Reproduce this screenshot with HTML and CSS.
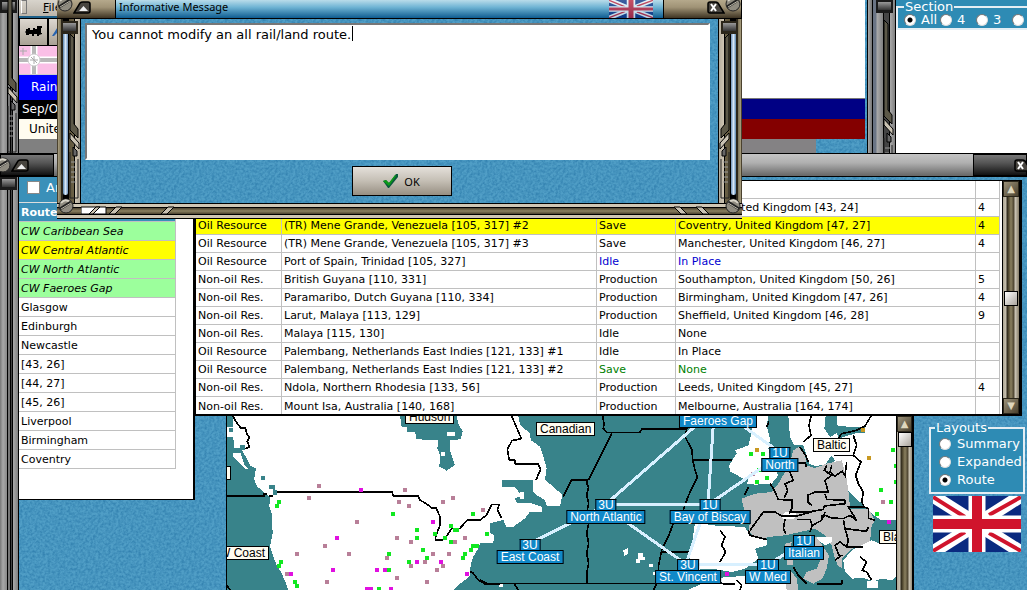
FILE: index.html
```html
<!DOCTYPE html>
<html lang="en">
<head>
    <meta charset="UTF-8">
    <meta name="viewport" content="width=device-width, initial-scale=1.0">
    <title>Informative Message</title>
    <link rel="stylesheet" href="styles.css">
</head>
<body>
    <!-- shared shapes -->
    <svg class="defs" aria-hidden="true">
        <symbol id="screw" viewBox="0 0 16 16">
            <circle cx="8" cy="8" r="7" fill="#8f8b80" stroke="#222"/>
            <path d="M3 5Q7 0 12 4" fill="none" stroke="#d8d4c8" stroke-width="2"/>
            <path d="M2 11L13 4" stroke="#222" stroke-width="3"/>
            <path d="M3 11L13 5" stroke="#bbb6a8"/>
        </symbol>
        <symbol id="roll-up" viewBox="0 0 18 13">
            <path d="M1 12L7 2Q8 1 10 1H15Q17 1 17 3V10Q17 12 15 12Z" fill="#48453f" stroke="#000" stroke-width="1.5"/>
            <path d="M6 10L10.500 5L15 10Z" fill="#eee"/>
        </symbol>
        <symbol id="cross" viewBox="0 0 18 13">
            <path d="M17 12L11 2Q10 1 8 1H3Q1 1 1 3V10Q1 12 3 12Z" fill="#48453f" stroke="#000" stroke-width="1.5"/>
            <path d="M4 3L9 10M9 3L4 10" stroke="#fff" stroke-width="2"/>
        </symbol>
        <symbol id="flag" viewBox="0 0 88 56" preserveAspectRatio="none">
            <path d="M0 0H88V56H0Z" fill="#0a2a80"/>
            <path d="M0 0L88 56M88 0L0 56" stroke="#fff" stroke-width="13"/>
            <path d="M0 1L32 21M88 1L56 19M0 55L32 36M88 55L56 37" stroke="#d0142c" stroke-width="4"/>
            <path d="M44 0V56M0 28H88" stroke="#fff" stroke-width="17"/>
            <path d="M44 0V56M0 28H88" stroke="#d0142c" stroke-width="10"/>
        </symbol>
        <symbol id="rail" viewBox="0 0 11 168">
            <path d="M1 2L5 6V92L9 97V106L1 98Z" fill="#5c5848" stroke="#000"/>
            <path d="M1 101L10 111V117L1 107Z" fill="#c9c2b2" stroke="#000"/>
            <path d="M4 115L8 119V124H4Z" fill="#666" stroke="#000"/>
            <path d="M1 120V166H9V127" fill="none" stroke="#222"/>
            <path d="M2 130H7M2 135H6M2 140H7M2 145H6M2 150H7" stroke="#999"/>
        </symbol>
    </svg>

    <div class="desktop">
        <!-- main form -->
        <section class="window main-window">
            <div class="frame frame-grey">
                <span class="knob"></span>
                <svg class="rail"><use href="#rail"/></svg>
            </div>
            <div class="side-tools">
                <div class="menu"><span class="grip"></span><button class="menu-item"><u>F</u>ile</button></div>
                <div class="tools">
                    <button class="tool" aria-label="Rail">
                        <svg width="18" height="12" viewBox="0 0 18 12"><path d="M1 4H3V3H5V5H8V3H10V4H12V1H17V3H16V8H17V9L14 10V11H12V9H9V11H7V9H4V10H1V8L0 7L1 6Z" fill="#000"/></svg>
                    </button>
                    <button class="tool tool-air" aria-label="Air">
                        <svg width="14" height="14" viewBox="0 0 14 14"><path d="M2 12L9 1L12 2L10 7L13 12H10L8 8L4 12Z" fill="#2864b0"/></svg>
                    </button>
                </div>
                <svg class="ensign" viewBox="0 0 60 28">
                    <path d="M0 0H60V28H0Z" fill="#fabfe6"/>
                    <path d="M15 0V28M0 14H60" stroke="#fff" stroke-width="7"/>
                    <path d="M15 0V28M0 14H60" stroke="#b8b8b8" stroke-width="4"/>
                    <circle cx="15" cy="14" r="6" fill="#fff" stroke="#ccc"/>
                    <path d="M11 14H19M15 10V18M12 11L18 17M1 5H8M4 2V9" stroke="#aaa"/>
                </svg>
                <div class="weather">Rain</div>
                <div class="turn">Sep/Oct</div>
                <div class="power">United</div>
            </div>
            <div class="display">
                <div class="display-view"></div>
                <div class="display-navy"></div>
                <div class="display-maroon"></div>
                <div class="display-status"></div>
            </div>
        </section>

        <!-- section picker -->
        <section class="window section-window">
            <div class="frame frame-grey frame-wide">
                <span class="knob"></span>
                <svg class="rail"><use href="#rail"/></svg>
            </div>
            <div class="section-body">
                <fieldset class="group section-group">
                    <legend>Section</legend>
                    <label><input type="radio" name="section" checked>All</label>
                    <label><input type="radio" name="section">4</label>
                    <label><input type="radio" name="section">3</label>
                    <label><input type="radio" name="section" aria-label="2"></label>
                </fieldset>
                <div class="section-list"></div>
            </div>
        </section>

        <!-- resources and route -->
        <section class="window route-window">
            <header class="grey-title">
                <div class="cap cap-dark cap-left">
                    <svg class="screw"><use href="#screw"/></svg>
                    <button class="cap-button" aria-label="Roll up"><svg><use href="#roll-up"/></svg></button>
                </div>
                <div class="cap cap-dark cap-right">
                    <button class="cap-button" aria-label="Close"><svg><use href="#cross"/></svg></button>
                </div>
            </header>
            <div class="route-body">
                <div class="frame frame-grey">
                    <span class="knob"></span>
                </div>
                <div class="route-column">
                    <label class="area"><input type="checkbox">Area</label>
                    <div class="route-panel">
                        <table class="route-list">
                            <thead><tr><th>Route</th></tr></thead>
                            <tbody>
                                <tr class="sea"><td>CW Caribbean Sea</td></tr>
                                <tr class="sea current"><td>CW Central Atlantic</td></tr>
                                <tr class="sea"><td>CW North Atlantic</td></tr>
                                <tr class="sea"><td>CW Faeroes Gap</td></tr>
                                <tr><td>Glasgow</td></tr>
                                <tr><td>Edinburgh</td></tr>
                                <tr><td>Newcastle</td></tr>
                                <tr><td>[43, 26]</td></tr>
                                <tr><td>[44, 27]</td></tr>
                                <tr><td>[45, 26]</td></tr>
                                <tr><td>Liverpool</td></tr>
                                <tr><td>Birmingham</td></tr>
                                <tr><td>Coventry</td></tr>
                            </tbody>
                        </table>
                    </div>
                </div>
                <div class="work-column">
                    <div class="resource-panel">
                        <table class="resources">
                            <colgroup><col class="c-type"><col class="c-from"><col class="c-use"><col><col class="c-count"></colgroup>
                            <tbody>
                                <tr><td></td><td></td><td></td><td></td><td></td></tr>
                                <tr><td></td><td></td><td></td><td>Belfast, United Kingdom [43, 24]</td><td>4</td></tr>
                                <tr class="current"><td>Oil Resource</td><td>(TR) Mene Grande, Venezuela [105, 317] #2</td><td>Save</td><td>Coventry, United Kingdom [47, 27]</td><td>4</td></tr>
                                <tr><td>Oil Resource</td><td>(TR) Mene Grande, Venezuela [105, 317] #3</td><td>Save</td><td>Manchester, United Kingdom [46, 27]</td><td>4</td></tr>
                                <tr><td>Oil Resource</td><td>Port of Spain, Trinidad [105, 327]</td><td class="blue">Idle</td><td class="blue">In Place</td><td></td></tr>
                                <tr><td>Non-oil Res.</td><td>British Guyana [110, 331]</td><td>Production</td><td>Southampton, United Kingdom [50, 26]</td><td>5</td></tr>
                                <tr><td>Non-oil Res.</td><td>Paramaribo, Dutch Guyana [110, 334]</td><td>Production</td><td>Birmingham, United Kingdom [47, 26]</td><td>4</td></tr>
                                <tr><td>Non-oil Res.</td><td>Larut, Malaya [113, 129]</td><td>Production</td><td>Sheffield, United Kingdom [46, 28]</td><td>9</td></tr>
                                <tr><td>Non-oil Res.</td><td>Malaya [115, 130]</td><td>Idle</td><td>None</td><td></td></tr>
                                <tr><td>Oil Resource</td><td>Palembang, Netherlands East Indies [121, 133] #1</td><td>Idle</td><td>In Place</td><td></td></tr>
                                <tr><td>Oil Resource</td><td>Palembang, Netherlands East Indies [121, 133] #2</td><td class="green">Save</td><td class="green">None</td><td></td></tr>
                                <tr><td>Non-oil Res.</td><td>Ndola, Northern Rhodesia [133, 56]</td><td>Production</td><td>Leeds, United Kingdom [45, 27]</td><td>4</td></tr>
                                <tr><td>Non-oil Res.</td><td>Mount Isa, Australia [140, 168]</td><td>Production</td><td>Melbourne, Australia [164, 174]</td><td></td></tr>
                            </tbody>
                        </table>
                        <div class="scrollbar">
                            <button class="arrow" aria-label="Scroll up">▲</button>
                            <div class="track"><span class="thumb thumb-mid"></span></div>
                            <button class="arrow" aria-label="Scroll down">▼</button>
                        </div>
                    </div>
                    <div class="map-row">
                        <div class="map">
                            <svg class="world" viewBox="21 48 2010 522" preserveAspectRatio="xMinYMin slice" shape-rendering="crispEdges">
                                <path class="water" d="M21 48H2600V900H21Z"/>
                                <!-- North America -->
                                <path class="land" d="M40 48H895L900 75L930 100L932 120L960 140L970 170L980 205L975 240L1000 260L1027 285L1020 318H980L975 300L950 285L940 275V240H845V262H885L900 280V290L885 295L890 308H930L965 320V335H930L915 355L880 380H858L850 360L810 370V398L822 405L820 430H780L775 445L760 470L752 495L750 525L735 540L715 555L700 570H205L200 555L185 520L170 495L160 470L150 440L158 400L155 340L148 320L150 290L130 275L112 260L103 240L105 210L90 205L75 180L65 145H42L40 110H21V80H38Z"/>
                                <path class="water" d="M540 48L545 80H560V95H585L590 118L655 120L652 145L660 165L658 200L680 212L705 195L690 150V120L722 118L728 95L715 70L710 48ZM28 60H38V72H28ZM28 84H38V96H28ZM60 135H76V150H66L92 198L108 206V214H94L62 162V150H40V145H60ZM124 229H134V239H124ZM148 254H164V270H170V284H160V266H148Z"/>
                                <path class="land" d="M40 160H62L74 195L86 208H76L60 190L40 172ZM682 96H706V108H682ZM662 156H674V168H662ZM900 275H912V298H900ZM1210 450L1225 444V460L1212 470ZM1255 460H1270V472H1275V480H1260V490H1247V478H1255ZM1288 492H1298V502H1288ZM1300 516H1310V526H1300ZM836 550H848V562H836Z"/>
                                <path class="edge" d="M38 48L50 68L62 84H76L80 100L88 112L82 125L88 140L76 146M21 288H132V282H140M148 288H160M172 276H516L520 288H594L600 300L620 312L636 324H648L660 350V376L646 412V420H668L680 408L695 385H720L742 360H780L800 345L816 313H838L832 330L845 355M750 515L760 520L775 540L795 552H840M21 556L30 570"/>
                                <path class="edge" d="M875 48L904 116L876 122L862 148L868 180H884L886 192H955L962 208L948 240M1030 290L1055 240H1100V250L1106 262L1100 285L1106 310L1100 340L1106 370L1100 400L1106 430L1100 460L1106 490L1100 520V550M1148 48L1152 70L1150 85L1160 97H1260L1266 86H1400L1396 112L1416 150L1418 180L1424 206L1432 232L1420 255L1404 290L1390 330L1360 370L1345 410L1325 450L1315 500V550M1175 100L1106 240M1325 456H1466M1420 180H1536M780 540L800 550H1310L1300 570M882 550L895 570"/>
                                <!-- Europe -->
                                <g transform="translate(1545 36)">
                                    <path class="land" d="M60 12H100L95 40L105 80L100 110L110 150L130 190L110 215L60 218L35 215L45 190L25 200L-15 178L-18 160L5 125L0 115L40 100L50 60Z"/>
                                    <path class="land" d="M160 12H272L268 50L285 75L305 60L310 80L390 55V45H345L305 40V12H487V325L440 325L420 312L300 200L250 165H225L205 100L178 100L165 75Z"/>
                                    <path class="water" d="M272 12H305L300 40L312 60L285 75L268 50ZM345 46H390V62H345ZM120 150L165 145L150 190L130 190ZM210 150L240 162L270 158L290 130L300 145L260 178L215 180Z"/>
                                    <path class="occupied" d="M20 260L60 245L110 240L130 215L150 180L165 150L175 115L190 105L210 130L215 160L240 168L275 155L320 145L335 200L342 250L345 290L400 290L420 325L410 340L405 390L380 405L350 410L320 440L300 440L290 400L270 370L240 350L150 370L100 375L80 385L40 360L45 330L25 285Z"/>
                                    <path class="land" d="M-120 330L-70 340L30 345L45 370L95 383V400L60 410L70 440L30 470L-10 480L-70 470L-140 475ZM-70 500L-20 495L60 490L155 495L165 534H-140ZM140 312L150 300H180L185 312L175 322H145Z"/>
                                    <path class="occupied" d="M215 385L245 375L262 400L282 430L275 470L262 500L235 515L205 500L215 480L245 470L255 445L232 420ZM150 395L170 390L165 410L152 412ZM155 440H175V460H155ZM150 500L170 480L185 500L190 534H155ZM300 440H320L322 470L308 460Z"/>
                                    <path class="land" d="M245 375H290V390L270 400L250 385ZM350 415L410 385L435 395L487 395V490L470 505L440 500L415 508L385 498L350 500L330 480L325 445ZM395 508H430V528H395Z"/>
                                    <path class="edge" d="M228 12L222 40L228 70L205 90M195 105L212 130L220 150M190 152H210L215 166M102 28L95 45M408 12L390 42L365 55L320 65L310 80M355 70L365 100L355 130L378 150L362 190L370 215L385 240L380 270L388 285M388 285L400 290V318L420 325M298 130H355M165 180L175 205L150 215L158 235L148 258M105 215L115 230L130 262L172 265L170 290L163 305M275 160L268 175L290 190L270 205L280 240L240 240L218 250V270L230 280M290 160L285 180L300 192L322 178L330 190L335 150M270 245L275 262L330 265V275L268 282L265 292L220 300H165M45 355L85 300H120L140 312H185L230 300M185 322H225L232 340L225 360M150 320L145 350L152 365M232 340L260 325L262 310H270L290 318L325 320L345 310L365 325L340 285H388M270 300L265 318M325 320L330 350L395 358L400 345M330 350L340 385L335 405H385M335 405L315 390L300 400L312 430H320L300 445M40 355L45 370L95 383M40 225L28 250M175 465L190 490L215 515M245 516H320L322 505M375 435L395 450L382 475L395 480L410 505M5 505L20 520L15 534M-45 355L-30 375L-40 400L-28 420L-45 450M-50 510L-35 515H0"/>
                                    <path class="oil" d="M60 114H72M377 54H389M396 138H408"/>
                                    <path class="rail-dot" d="M42 126H54M78 126H90M66 174H84M60 210H72M90 198H102M432 234H444M462 270H474M420 306H432M468 114H480M478 162H487M478 210H487"/>
                                    <path class="mineral" d="M49 187H61M438 270H450"/>
                                    <path class="coal" d="M455 330H467M-30 486H-18"/>
                                </g>
                                <path class="mineral" d="M291 258H303M261 294H273M549 270H561M531 306H543M561 318H573M663 306H675M693 294H705M783 330H795M405 366H417M309 438H321M225 462H237M381 462H393M525 414H537M567 426H579M495 474H507M633 462H645M681 462H693M609 486H621M567 498H579M645 510H657M663 498H675M315 546H327M525 534H537M615 546H627M195 522H207M699 426H711M729 414H741"/>
                                <path class="rail-dot" d="M171 306H183M165 318H177M513 342H525M753 342H765M687 378H699M585 390H597M585 414H597M639 402H651M699 390H717M669 414H681M687 426H699M603 450H615M615 474H627M561 486H573M501 462H513M501 510H513M753 438H777M747 450H759M729 462H741M723 474H735M795 402H807M177 486H189M171 498H183M219 546H231M225 558H237M471 568H483"/>
                                <path class="coal" d="M417 269H429M633 366H645M345 414H357M333 510H345M465 510H477M489 510H501M585 486H597M657 486H669M207 522H219M735 522H747M435 568H459M507 568H519"/>
                                <path class="lane" d="M930 430L1130 330M1158 312L1430 75M1480 72L1464 312M1160 314H1470M1210 360L1395 490M1442 365L1400 485M1470 310L1660 180M1560 72L1670 150M1404 494H1644M1640 495L1750 430"/>
                            </svg>
                            <span class="place canadian">Canadian</span>
                            <span class="place hudson">Hudson</span>
                            <span class="place baltic">Baltic</span>
                            <span class="place west-coast">W Coast</span>
                            <span class="place black-sea">Black Sea</span>
                            <span class="place pacific"></span>
                            <div class="pin faeroes"><span>Faeroes Gap</span></div>
                            <div class="pin north-atlantic"><b>3U</b><span>North Atlantic</span></div>
                            <div class="pin east-coast"><b>3U</b><span>East Coast</span></div>
                            <div class="pin biscay"><b>1U</b><span>Bay of Biscay</span></div>
                            <div class="pin st-vincent"><b>3U</b><span>St. Vincent</span></div>
                            <div class="pin north"><b>1U</b><span>North</span></div>
                            <div class="pin italian"><b>1U</b><span>Italian</span></div>
                            <div class="pin w-med"><b>1U</b><span>W Med</span></div>
                        </div>
                        <div class="scrollbar map-scroll">
                            <button class="arrow" aria-label="Scroll map up">▲</button>
                            <div class="track"><span class="thumb"></span></div>
                        </div>
                        <div class="layouts">
                            <fieldset class="group layout-group">
                                <legend>Layouts</legend>
                                <label><input type="radio" name="layout">Summary</label>
                                <label><input type="radio" name="layout">Expanded</label>
                                <label><input type="radio" name="layout" checked>Route</label>
                            </fieldset>
                            <svg class="flag"><use href="#flag"/></svg>
                        </div>
                    </div>
                </div>
            </div>
        </section>

        <!-- message box -->
        <section class="window dialog" role="dialog" aria-labelledby="dialog-title">
            <header class="dialog-title">
                <div class="cap cap-brown cap-left">
                    <svg class="screw"><use href="#screw"/></svg>
                    <button class="cap-button" aria-label="Roll up"><svg><use href="#roll-up"/></svg></button>
                </div>
                <h1 id="dialog-title">Informative Message</h1>
                <svg class="title-flag"><use href="#flag"/></svg>
                <div class="cap cap-brown cap-right">
                    <button class="cap-button" aria-label="Close"><svg><use href="#cross"/></svg></button>
                    <svg class="screw"><use href="#screw"/></svg>
                </div>
            </header>
            <div class="dialog-middle">
                <div class="frame frame-brown">
                    <span class="knob"></span>
                    <span class="tube"></span>
                    <svg class="rail"><use href="#rail"/></svg>
                    <svg class="screw"><use href="#screw"/></svg>
                </div>
                <div class="dialog-body">
                    <textarea class="message" aria-label="Message" autofocus>You cannot modify an all rail/land route.</textarea>
                    <span class="caret"></span>
                    <button class="ok">
                        <svg width="15" height="14" viewBox="0 0 15 14"><path d="M0 7L3 6L6 9L13 0H15V3L6 14H5Z" fill="#0a5a3c"/><path d="M0 7L3 6L6 9L12 1L13 2L6 12Z" fill="#0c9c18"/></svg>
                        OK
                    </button>
                </div>
                <div class="frame frame-brown frame-right">
                    <span class="knob"></span>
                    <span class="tube"></span>
                    <svg class="rail"><use href="#rail"/></svg>
                    <svg class="screw"><use href="#screw"/></svg>
                </div>
            </div>
            <footer class="dialog-foot">
                <svg width="110" height="16" viewBox="0 0 110 16">
                    <path d="M0 11V4H25V11Z" fill="#fff" stroke="#000"/>
                    <path d="M8 11L15 4H19L12 11ZM28 11L35 4H41L34 11ZM80 11L87 4H93L86 11Z" fill="#c9c2b2" stroke="#000"/>
                </svg>
                <svg width="50" height="16" viewBox="0 0 50 16">
                    <path d="M19 11L12 4H6L13 11ZM41 11L34 4H28L35 11Z" fill="#c9c2b2" stroke="#000"/>
                </svg>
            </footer>
        </section>
    </div>
</body>
</html>
```

FILE: styles.css
```css
* {
    box-sizing: border-box;
}

body {
    margin: 0;
    font-family: "DejaVu Sans", Verdana, sans-serif;
    font-size: 11px;
    color: #000;
}

button, input, textarea {
    font: inherit;
    margin: 0;
    padding: 0;
}

.defs {
    position: absolute;
    width: 0;
    height: 0;
}

.desktop {
    position: relative;
    height: 100vh;
    overflow: hidden;
}

/* sea-blue grain shared by every window */
.desktop, .dialog-body, .route-body, .display {
    background-color: #509ec6;
    background-image: url("data:image/svg+xml,%3Csvg xmlns='http://www.w3.org/2000/svg' width='96' height='96'%3E%3Cfilter id='n' x='0' y='0' width='1' height='1' color-interpolation-filters='sRGB'%3E%3CfeTurbulence type='fractalNoise' baseFrequency='.4' numOctaves='2' stitchTiles='stitch'/%3E%3CfeColorMatrix values='0 0 0 0 .16 0 0 0 0 .47 0 0 0 0 .66 1.4 0 0 0 -.45'/%3E%3C/filter%3E%3Crect width='96' height='96' filter='url(%23n)'/%3E%3C/svg%3E");
}

.window {
    position: absolute;
    display: flex;
    overflow: hidden;
}

.main-window {
    top: 0;
    left: 0;
    right: 159px;
    height: 153px;
}

.section-window {
    top: 0;
    left: 867px;
    right: 0;
    height: 153px;
}

.route-window {
    top: 153px;
    left: 0;
    right: 0;
    bottom: 0;
    flex-direction: column;
}

.dialog {
    top: 0;
    left: 57px;
    width: 685px;
    flex-direction: column;
}

/* window frames */
.frame {
    position: relative;
    flex: none;
    width: 19px;
    border-right: 1px solid #000;
}

.frame-grey {
    background: linear-gradient(to right, #777 0, #a8a8a8 3px, #888 7px, #000 7px 8px, #777 8px 10px, #000 10px 11px, #444 11px 12px, #000 12px 13px, #aaa 13px, #808080 18px);
}

.frame-wide {
    width: 29px;
    border-left: 1px solid #000;
    background: linear-gradient(to right, #aaa 0, #777 4px, #000 4px 5px, #6a7484 5px 8px, #aaa 9px, #808080 15px, #000 15px 16px, #444 16px 21px, #000 21px 22px, #aaa 22px, #808080 27px);
}

.frame-brown {
    width: 24px;
    background: linear-gradient(to right, #4a412e 0 1px, #a89e80 1px, #7a7054 4px, #2b261a 4px 6px, #000 6px 12px, #5c5238 12px, #6b6248 17px, #000 17px 18px, #cfc6b4 18px, #b5ad9d 23px);
}

.frame-right {
    transform: scaleX(-1);
}

.knob {
    position: absolute;
    top: 0;
    left: 0;
    width: 17px;
    height: 13px;
    border: 2px solid #1a1a1a;
    border-bottom-width: 3px;
    background: linear-gradient(#999, #333);
}

.frame-wide .knob {
    left: 8px;
}

.frame-brown .knob {
    top: 2px;
    left: 4px;
    border-color: #2b261a;
}

.tube {
    position: absolute;
    top: 15px;
    left: 6px;
    bottom: 8px;
    width: 5px;
    border-radius: 0 0 3px 3px;
    background: linear-gradient(to right, #5a86b0, #d8e8f8, #6b90b8);
}

.rail {
    position: absolute;
    top: -14px;
    left: 7px;
    width: 11px;
    height: 168px;
}

.frame-wide .rail {
    top: 18px;
    left: 15px;
}

.frame-brown .rail {
    top: 13px;
    left: 12px;
}

.screw {
    flex: none;
    width: 16px;
    height: 16px;
}

.frame .screw {
    position: absolute;
    left: 1px;
    bottom: -11px;
}

.cap {
    display: flex;
    align-items: center;
    flex: none;
}

.cap-dark {
    width: 54px;
    border: 1px solid #000;
    background: linear-gradient(#777, #555 40%, #111);
}

.cap-dark.cap-left .screw {
    margin-left: -6px;
}

.cap-dark.cap-right {
    padding-left: 40px;
}

.cap-brown {
    width: 59px;
    border-right: 1px solid #000;
    background: linear-gradient(#b5a98c, #a09376 40%, #3e3423);
}

.cap-brown.cap-right {
    width: 79px;
    border-left: 1px solid #000;
    justify-content: flex-end;
}

.cap-brown .screw {
    margin-top: -10px;
}

.cap-button {
    flex: none;
    width: 18px;
    height: 13px;
    border: 0;
    background: none;
}

.cap-brown .cap-button {
    margin-bottom: 3px;
}

.cap-button svg {
    display: block;
    width: 18px;
    height: 13px;
}

/* main form */
.side-tools {
    display: flex;
    flex-direction: column;
    flex: none;
    width: 60px;
    background: #808080;
}

.menu {
    display: flex;
    height: 18px;
    border-bottom: 2px solid #1d5f88;
    background: linear-gradient(#d8d4cc, #bcb5aa);
}

.grip {
    width: 6px;
    margin: 0 16px 2px 2px;
    border: 1px solid #777;
    border-left-color: #fff;
}

.menu-item {
    border: 0;
    background: none;
    line-height: 14px;
}

.tools {
    display: flex;
    height: 28px;
}

.tool {
    width: 29px;
    border: 1px solid #000;
    background: linear-gradient(#ddd8d0, #a9a195);
}

.tool-air {
    padding-right: 12px;
}

.ensign {
    width: 60px;
    height: 28px;
}

.weather, .turn, .power {
    overflow: hidden;
    font-size: 12px;
}

.weather {
    padding-left: 12px;
    line-height: 25px;
    color: #fff;
    background: #00f;
    border-top: 1px solid #ccc;
}

.turn {
    padding-left: 3px;
    line-height: 19px;
    color: #fff;
    background: #000;
}

.power {
    padding-left: 10px;
    line-height: 20px;
    background: #fffcf0;
}

.display {
    display: flex;
    flex: 1;
    flex-direction: column;
}

.display-view {
    flex: 1;
    margin-right: 3px;
    background: #fff;
}

.display-navy, .display-maroon {
    height: 20px;
    margin-right: 3px;
}

.display-navy {
    height: 21px;
    border-top: 1px solid #777;
    background: #000084;
}

.display-maroon {
    background: #840000;
}

.display-status {
    height: 14px;
    margin-right: 52px;
    background: #848284;
}

/* group boxes */
.group {
    min-width: 0;
    margin: 0;
    border: 2px solid #e4eef4;
    font-size: 13px;
    color: #fff;
    background: #2e8bb4;
}

.group legend {
    padding: 0 1px;
    line-height: 14px;
}

.group label {
    display: flex;
    align-items: center;
    white-space: nowrap;
}

input[type="radio"] {
    appearance: none;
    flex: none;
    width: 12px;
    height: 12px;
    border: 1px solid #777;
    border-right-color: #ddd;
    border-bottom-color: #ddd;
    border-radius: 50%;
    background: #fff;
}

input[type="radio"]:checked {
    background: radial-gradient(circle, #000 2px, #fff 3px);
}

.section-body {
    display: flex;
    flex: 1;
    flex-direction: column;
    min-width: 0;
    background: #2e8bb4;
}

.section-group {
    display: flex;
    gap: 4px;
    width: 180px;
    height: 30px;
    padding: 0 6px;
}

.section-group label {
    gap: 5px;
    width: 32px;
    line-height: 12px;
}

.section-list {
    flex: 1;
    background: #fff;
}

/* resources and route */
.grey-title {
    display: flex;
    flex: none;
    justify-content: space-between;
    height: 24px;
    border: 1px solid #000;
    border-width: 1px 0;
    background: linear-gradient(#c4c4c4, #b0b0b0 40%, #666);
}

.route-body {
    display: flex;
    flex: 1;
    min-height: 0;
}

.route-column {
    flex: none;
    width: 176px;
}

.area {
    display: flex;
    gap: 6px;
    align-items: center;
    height: 26px;
    padding: 0 8px 4px;
    font-size: 13px;
    color: #fff;
    background: #3a90b9;
    border-bottom: 1px solid #ddd;
}

.area input {
    appearance: none;
    width: 13px;
    height: 13px;
    border: 1px solid #888;
    background: #fff;
}

.route-panel {
    height: 297px;
    border: 1px solid #000;
    border-width: 0 2px 1px 0;
    background: #fff;
}

table {
    border-collapse: separate;
    border-spacing: 0;
}

td, th {
    overflow: hidden;
    padding: 1px 2px 0;
    font-weight: normal;
    text-align: left;
    white-space: nowrap;
    border: 1px solid #c0c0c0;
    border-width: 0 1px 1px 0;
}

.route-list {
    width: 157px;
}

.route-list td, .route-list th {
    height: 19px;
    line-height: 17px;
}

.route-list th {
    font-weight: bold;
    color: #fff;
    background: #3a90b9;
}

.sea {
    font-style: italic;
    background: #9cff9c;
}

.current {
    background: #ff0;
}

.work-column {
    display: flex;
    flex: 1;
    flex-direction: column;
    min-width: 0;
}

.resource-panel {
    display: flex;
    flex: none;
    align-items: stretch;
    height: 236px;
    margin: 3px 5px 0 0;
    overflow: hidden;
    border: 1px solid #000;
    border-width: 1px 2px 2px 1px;
    background: #fff;
}

.resources {
    flex: 1;
    align-self: flex-start;
    margin-right: 2px;
    table-layout: fixed;
}

.resources td {
    height: 18px;
    line-height: 16px;
}

.resources tr:last-child td {
    border-bottom: 0;
}

.c-type {
    width: 86px;
}

.c-from {
    width: 315px;
}

.c-use {
    width: 79px;
}

.c-count {
    width: 24px;
}

.blue {
    color: #0000d0;
}

.green {
    color: #008000;
}

/* scrollbars */
.scrollbar {
    display: flex;
    flex: none;
    flex-direction: column;
    width: 18px;
    border: 1px solid #000;
    border-width: 0 1px;
}

.arrow {
    height: 16px;
    border: 1px solid #2b261a;
    font-size: 10px;
    line-height: 12px;
    color: #ded6bc;
    background: linear-gradient(135deg, #9a9078, #4a412e);
}

.track {
    flex: 1;
    background: linear-gradient(to right, #ada694 0, #c9c2b2 3px, #2b261a 4px, #5c5238 6px, #8a8060 8px, #4a412e 11px, #d0c9ba 12px, #857c68 16px);
}

.thumb {
    display: block;
    width: 14px;
    height: 15px;
    margin: 0 1px;
    border: 1px solid #000;
    background: linear-gradient(135deg, #fff, #aaa49c);
}

.thumb-mid {
    position: relative;
    top: 47%;
}

/* map */
.map-row {
    display: flex;
    flex: 1;
    min-height: 0;
    padding-left: 31px;
}

.map {
    position: relative;
    flex: 1;
    overflow: hidden;
    border-left: 1px solid #000;
    font-family: "Liberation Sans", Arial, sans-serif;
    font-size: 12px;
}

.world {
    display: block;
    width: 100%;
    height: 100%;
}

.water {
    fill: #38838a;
}

.land {
    fill: #fff;
}

.occupied {
    fill: #c0c0c0;
}

.edge {
    fill: none;
    stroke: #000;
    stroke-width: 5;
}

.lane {
    fill: none;
    stroke: #d8f0ff;
    stroke-width: 9;
}

.mineral, .rail-dot, .coal, .oil {
    stroke-width: 12;
    stroke: #b87f98;
}

.rail-dot {
    stroke: #10e820;
}

.coal {
    stroke: #e010e0;
}

.oil {
    stroke: #c89820;
}

.place {
    position: absolute;
    height: 14px;
    padding: 0 3px;
    border: 1px solid #000;
    line-height: 13px;
    white-space: nowrap;
    background: #fffcf0;
}

.canadian {
    top: 6px;
    left: 309px;
}

.hudson {
    top: -6px;
    left: 178px;
}

.baltic {
    top: 22px;
    left: 586px;
}

.west-coast {
    top: 130px;
    left: -12px;
}

.black-sea {
    top: 114px;
    left: 652px;
}

.pacific {
    top: 50px;
    left: -4px;
}

.pin {
    position: absolute;
    display: flex;
    flex-direction: column;
    align-items: center;
    line-height: 12px;
    color: #fff;
    white-space: nowrap;
    transform: translateX(-50%);
}

.pin b, .pin span {
    height: 14px;
    padding: 0 3px;
    border: 1px solid #000;
    background: #1088c8;
}

.pin b {
    height: 11px;
    padding: 0 2px;
    border-bottom: 0;
    font-weight: normal;
    line-height: 10px;
}

.faeroes {
    top: -2px;
    left: 491px;
}

.north-atlantic {
    top: 83px;
    left: 379px;
}

.east-coast {
    top: 123px;
    left: 303px;
}

.biscay {
    top: 83px;
    left: 483px;
}

.st-vincent {
    top: 143px;
    left: 461px;
}

.north {
    top: 31px;
    left: 553px;
}

.italian {
    top: 119px;
    left: 577px;
}

.w-med {
    top: 143px;
    left: 541px;
}

.map-scroll {
    border-right-width: 2px;
}

.layouts {
    flex: none;
    width: 113px;
    padding: 5px 2px 0 15px;
}

.layout-group {
    padding: 0 8px 3px;
}

.layout-group legend {
    margin-left: -4px;
}

.layout-group label {
    gap: 6px;
    line-height: 18px;
}

.flag {
    display: block;
    width: 88px;
    height: 56px;
    margin: 2px 4px;
}

/* message box */
.dialog-title {
    display: flex;
    height: 19px;
    border-bottom: 1px solid #000;
    background: linear-gradient(#b9dcea, #6fb4d4 40%, #0f5c90);
}

.dialog-title h1 {
    flex: 1;
    margin: 0 0 0 3px;
    font-family: "Noto Sans", Tahoma, sans-serif;
    font-size: 11px;
    font-weight: normal;
    line-height: 14px;
}

.title-flag {
    width: 44px;
    height: 18px;
    margin-right: 10px;
    opacity: 0.7;
}

.dialog-middle {
    display: flex;
    height: 184px;
}

.dialog-body {
    position: relative;
    display: flex;
    flex: 1;
    flex-direction: column;
    align-items: center;
    gap: 6px;
    padding: 4px 0 0 4px;
}

.message {
    align-self: stretch;
    height: 137px;
    margin-right: 8px;
    padding: 2px 5px;
    resize: none;
    border: 2px solid #fff;
    border-top-color: #777;
    border-left-color: #777;
    outline: 0;
    font-size: 13px;
    line-height: 16px;
    color: #000;
    background: #fff;
    caret-color: transparent;
}

/* text cursor after the message */
.caret {
    position: absolute;
    top: 7px;
    left: 271px;
    width: 1px;
    height: 15px;
    background: #000;
}

.ok {
    display: flex;
    gap: 6px;
    align-items: center;
    justify-content: center;
    width: 100px;
    height: 30px;
    border: 1px solid #000;
    font-family: "Noto Sans", Tahoma, sans-serif;
    font-size: 11px;
    background: linear-gradient(#e4e0da, #c4beb4 50%, #978f82);
}

.dialog-foot {
    display: flex;
    justify-content: space-between;
    height: 16px;
    padding: 0 24px;
    background: linear-gradient(#000 1px, #cfc6b4 1px 4px, #000 4px 5px, #4a412e 5px, #8a8060 8px, #4a412e 11px, #000 11px 12px, #cfc6b4 12px 15px, #000 15px);
}
```
